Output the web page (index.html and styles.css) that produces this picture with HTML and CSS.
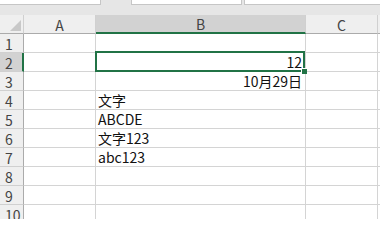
FILE: index.html
```html
<!DOCTYPE html>
<html lang="zh">
<head>
<meta charset="utf-8">
<link rel="stylesheet" href="styles.css">
</head>
<body>
<div class="app">
  <div class="bar">
    <div class="box box-name"></div>
    <div class="gap"></div>
    <div class="box box-fx"></div>
    <div class="box box-rest"></div>
  </div>
  <div class="sheet">
    <div class="hd corner"><span class="tri"></span></div>
    <div class="hd col">A</div>
    <div class="hd col sel-col">B</div>
    <div class="hd col">C</div>
    <div class="hd col extra"></div>

    <div class="hd row">1</div><div class="c"></div><div class="c"></div><div class="c"></div><div class="c"></div>
    <div class="hd row sel-row">2</div><div class="c"></div><div class="c num">12</div><div class="c"></div><div class="c"></div>
    <div class="hd row">3</div><div class="c"></div><div class="c num">10月29日</div><div class="c"></div><div class="c"></div>
    <div class="hd row">4</div><div class="c"></div><div class="c">文字</div><div class="c"></div><div class="c"></div>
    <div class="hd row">5</div><div class="c"></div><div class="c">ABCDE</div><div class="c"></div><div class="c"></div>
    <div class="hd row">6</div><div class="c"></div><div class="c">文字123</div><div class="c"></div><div class="c"></div>
    <div class="hd row">7</div><div class="c"></div><div class="c">abc123</div><div class="c"></div><div class="c"></div>
    <div class="hd row">8</div><div class="c"></div><div class="c"></div><div class="c"></div><div class="c"></div>
    <div class="hd row">9</div><div class="c"></div><div class="c"></div><div class="c"></div><div class="c"></div>
    <div class="hd row">10</div><div class="c"></div><div class="c"></div><div class="c"></div><div class="c"></div>

    <div class="selection"><span class="handle"></span></div>
  </div>
</div>
</body>
</html>
```
FILE: styles.css
```css
html, body {
  margin: 0;
  padding: 0;
  background: #ffffff;
}
.app {
  width: 380px;
  height: 219px;
  overflow: hidden;
  background: #ffffff;
  font-family: "Noto Sans CJK SC", "Noto Sans", sans-serif;
}
.bar {
  height: 15px;
  background: #e6e6e6;
  display: flex;
  align-items: flex-start;
}
.box {
  height: 4px;
  background: #ffffff;
  border: 1px solid #c6c6c6;
  border-top: none;
}
.box-name {
  width: 100px;
  border-left: none;
}
.gap {
  width: 30px;
}
.box-fx {
  width: 109px;
}
.box-rest {
  flex: 1;
  margin-left: 2px;
  border-right: none;
}
.sheet {
  position: relative;
  display: grid;
  grid-template-columns: 24px 72px 210px 72px 20px;
  grid-template-rows: 19px repeat(10, 19px);
}
.hd {
  background: #efefef;
  color: #444444;
  font-family: "Noto Sans CJK SC", "Noto Sans", sans-serif;
  font-size: 14px;
  display: flex;
  align-items: center;
  justify-content: center;
  box-sizing: border-box;
  border-right: 1px solid #d0d0d0;
  border-bottom: 1px solid #ababab;
  line-height: 1;
}
.corner {
  position: relative;
  border-right: 1px solid #d0d0d0;
  border-bottom: 1px solid #ababab;
}
.tri {
  position: absolute;
  right: 2px;
  bottom: 2px;
  width: 0;
  height: 0;
  border-left: 11px solid transparent;
  border-bottom: 11px solid #c8c8c8;
}
.col {
  padding-top: 1px;
}
.extra {
  border-right: none;
}
.sel-col {
  background: #d2d2d2;
  border-bottom: 2px solid #217346;
}
.row {
  border-bottom: 1px solid #d0d0d0;
  border-right: 1px solid #ababab;
  justify-content: flex-start;
  padding-left: 5px;
  padding-top: 2px;
}
.row:last-of-type {
  padding-left: 3px;
}
.sel-row {
  background: #d2d2d2;
  border-right: 2px solid #217346;
}
.c {
  box-sizing: border-box;
  border-right: 1px solid #d4d4d4;
  border-bottom: 1px solid #d4d4d4;
  font-size: 14px;
  color: #111111;
  display: flex;
  align-items: flex-end;
  padding: 0 3px 0 2px;
  line-height: 17px;
  white-space: nowrap;
}
.num {
  justify-content: flex-end;
}
.selection {
  position: absolute;
  left: 95px;
  top: 36px;
  width: 210px;
  height: 21px;
  box-sizing: border-box;
  border: 2px solid #217346;
  pointer-events: none;
}
.handle {
  position: absolute;
  right: -4px;
  bottom: -4px;
  width: 5px;
  height: 5px;
  background: #217346;
  border-left: 1px solid #ffffff;
  border-top: 1px solid #ffffff;
}
```
